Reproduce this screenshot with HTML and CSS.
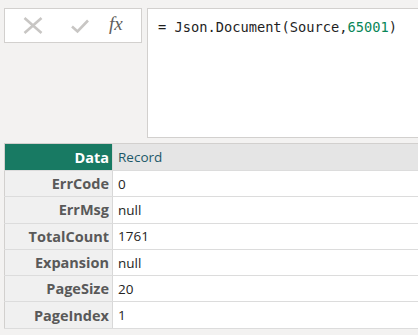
FILE: index.html
```html
<!DOCTYPE html>
<html lang="en">

<head>
    <meta charset="UTF-8">
    <meta name="viewport" content="width=device-width, initial-scale=1.0">
    <title>Query Editor</title>
    <link rel="stylesheet" href="styles.css">
</head>

<body>
    <!-- Formula bar -->
    <div class="formula-bar">
        <div class="formula-buttons">
            <svg class="icon icon-cancel" width="20" height="17" viewBox="0 0 20 17">
                <path d="M1.5 1 L18.5 16 M18.5 1 L1.5 16" />
            </svg>
            <svg class="icon icon-commit" width="20" height="16" viewBox="0 0 20 16">
                <path d="M2 8.5 L7.5 13.5 L18 2.5" />
            </svg>
            <span class="fx">fx</span>
        </div>
        <div class="formula-input">
            <span class="code">= Json.Document(Source,<span class="num">65001</span>)</span>
        </div>
    </div>

    <!-- Record preview -->
    <table class="record">
        <tr class="head">
            <th>Data</th>
            <td>Record</td>
        </tr>
        <tr>
            <th>ErrCode</th>
            <td>0</td>
        </tr>
        <tr>
            <th>ErrMsg</th>
            <td>null</td>
        </tr>
        <tr>
            <th>TotalCount</th>
            <td>1761</td>
        </tr>
        <tr>
            <th>Expansion</th>
            <td>null</td>
        </tr>
        <tr>
            <th>PageSize</th>
            <td>20</td>
        </tr>
        <tr>
            <th>PageIndex</th>
            <td>1</td>
        </tr>
    </table>
</body>

</html>
```

FILE: styles.css
```css
body {
    margin: 0;
    background-color: #f3f2f1;
    overflow: hidden;
    font-family: "Open Sans", "Noto Sans", sans-serif;
}

/* Formula bar */
.formula-bar {
    display: flex;
    align-items: flex-start;
    gap: 5px;
    padding: 8px 0 0 4px;
}

.formula-buttons {
    box-sizing: border-box;
    width: 138px;
    height: 35px;
    flex: none;
    display: flex;
    align-items: center;
    padding-left: 18px;
    background-color: #fff;
    border: 1px solid #d2d0ce;
}

.icon {
    flex: none;
    fill: none;
    stroke: #c8c6c4;
    stroke-width: 2.6;
}

.icon-commit {
    margin-left: 27px;
}

.fx {
    margin-left: 19px;
    margin-top: -3px;
    font-family: "Liberation Serif", serif;
    font-style: italic;
    font-size: 19px;
    color: #605e5c;
}

.formula-input {
    box-sizing: border-box;
    flex: 1;
    height: 130px;
    padding: 6px 0 0 10px;
    background-color: #fff;
    border: 1px solid #d2d0ce;
    border-right: none;
}

.code {
    font-family: "DejaVu Sans Mono", "Liberation Mono", monospace;
    font-size: 13.7px;
    color: #1f1f1f;
}

.num {
    color: #098658;
}

/* Record table */
.record {
    margin: 5px 0 0 4px;
    width: calc(100% - 4px);
    border-collapse: collapse;
    border: 1px solid #d2d0ce;
    border-right: none;
    font-size: 13.5px;
}

.record th,
.record td {
    height: 25.3px;
    padding: 0;
    border-bottom: 1px solid #dcdcdc;
}

.record th {
    width: 104px;
    padding-right: 3px;
    text-align: right;
    font-size: 14.5px;
    font-weight: 700;
    color: #595959;
    background-color: #f0f0f0;
    border-right: 1px solid #d8d8d8;
}

.record td {
    padding-left: 5px;
    color: #252423;
    background-color: #fff;
}

.record .head th {
    height: 26px;
    color: #fff;
    background-color: #187a63;
}

.record .head td {
    color: #1c5868;
    background-color: #e5e5e5;
}
```
